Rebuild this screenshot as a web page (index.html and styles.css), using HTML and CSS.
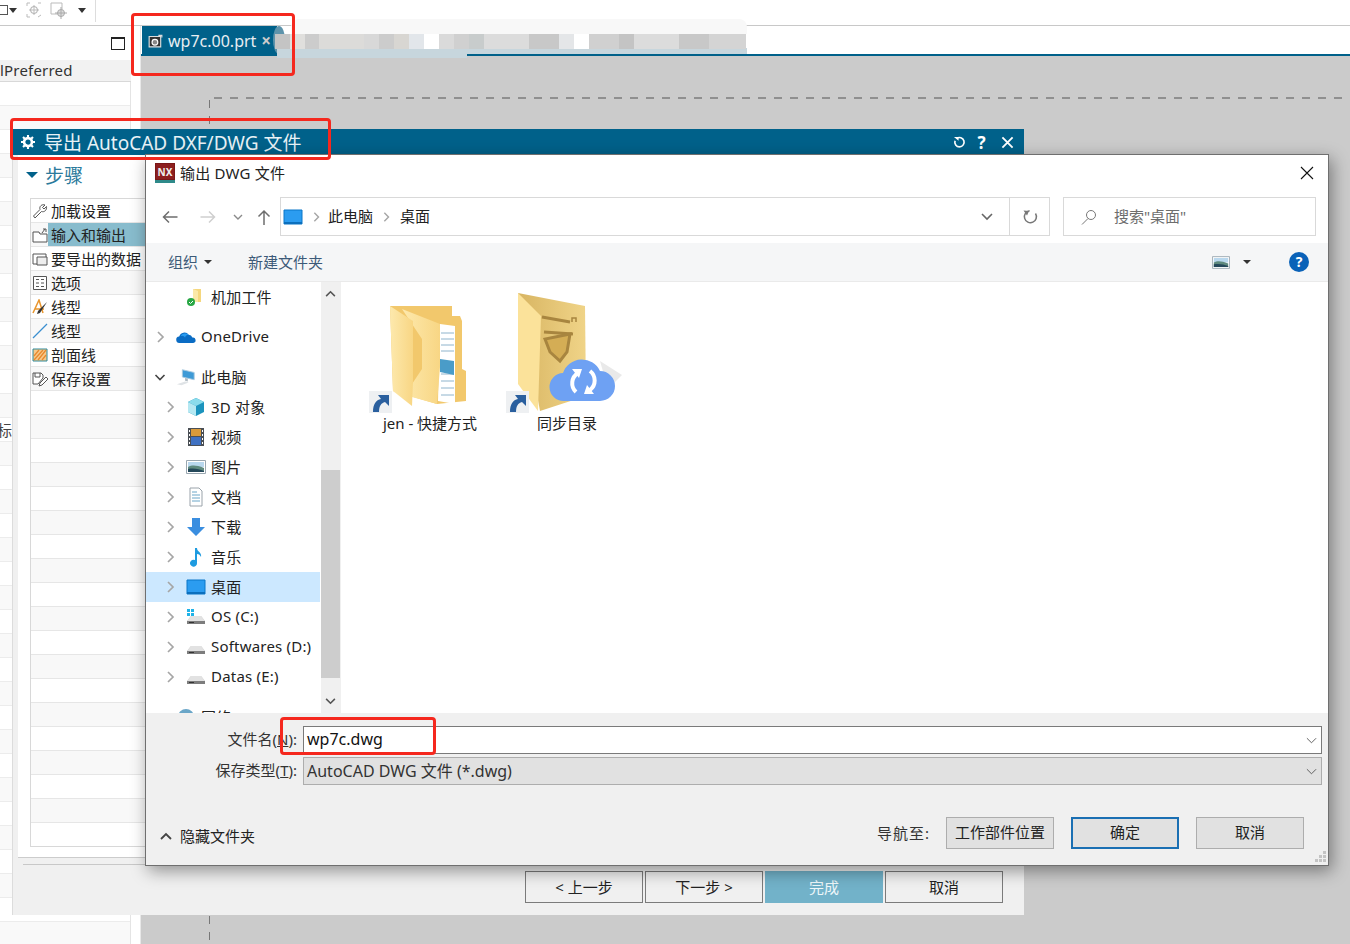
FILE: index.html
```html
<!DOCTYPE html>
<html lang="zh-CN">
<head>
    <meta charset="UTF-8">
    <title>wp7c.00.prt</title>
    <link rel="stylesheet" href="styles.css">
</head>
<body>
    <!-- shared icons -->
    <svg class="defs" aria-hidden="true">
        <symbol id="i-right" viewBox="0 0 12 12"><path d="M4 1 9 6 4 11" fill="none" stroke="#a6a6a6" stroke-width="1.700"/></symbol>
        <symbol id="i-drive" viewBox="0 0 20 20"><path d="M1 14 5 9h10l4 5v3H1z" fill="#c4c4c4"/><path d="M1 14h18v3H1z" fill="#7d7d7d"/><path d="M5 9h10l4 5H1z" fill="#e2e2e2"/><path d="M3 15h5v1H3z" fill="#333"/></symbol>
        <symbol id="i-desktop" viewBox="0 0 20 16"><path d="M1 1h18v14H1z" fill="#2b9cf0" stroke="#0b76c8"/><path d="M1 13h18v2H1z" fill="#0b6fbd"/></symbol>
        <symbol id="i-picture" viewBox="0 0 20 16"><path d="M.5 1.500h19v13H.5z" fill="#fff" stroke="#9aa7b0"/><path d="M2 3h16v5H2z" fill="#b9d8ee"/><path d="M2 8c4-2 8-2 16 1v4H2z" fill="#5e8a7e"/><path d="M2 10c6-1 11 0 16 2v1H2z" fill="#24485a"/></symbol>
        <symbol id="i-shortcut" viewBox="0 0 23 23"><path d="M0 0h23v23H0z" fill="#eef0f2"/><path d="M4 21c0-8 3-12 8-13L9 4h11v11l-4-4c-4 1-6 4-6 10z" fill="#2a5f9e"/></symbol>
    </svg>

    <div class="app">
        <div class="toolbar">
            <span class="cut-glyph"></span>
            <span class="caret"></span>
            <svg class="tool-icon" viewBox="0 0 16 16"><path d="M1 1h3M1 1v3M15 1h-3M1 15V12M4 15H1" fill="none" stroke="#bbb"/><circle cx="8" cy="8" r="3.500" fill="none" stroke="#aaa"/><path d="M8 3v10M3 8h10M12 15l3-2" stroke="#bbb" fill="none"/></svg>
            <svg class="tool-icon tool-icon-b" viewBox="0 0 18 18"><path d="M1 1h11v11H1z" fill="none" stroke="#bbb"/><circle cx="11" cy="11" r="3.500" fill="#ddd" stroke="#aaa"/><path d="M11 5v12M5 11h12" stroke="#aaa"/></svg>
            <span class="caret caret-b"></span>
            <span class="tool-sep"></span>
        </div>

        <div class="workspace">
            <div class="side-panel">
                <div class="side-top"><span class="max-box"></span></div>
                <div class="pref-head">lPreferred</div>
                <div class="pref-rows">标</div>
            </div>
            <div class="main-area">
                <div class="tab-strip">
                    <div class="tab">
                        <svg class="tab-icon" viewBox="0 0 13 13"><path d="M1 3h10v9H1z" fill="#333" stroke="#ddd"/><circle cx="6" cy="8" r="2.500" fill="#888" stroke="#fff"/><path d="M9 2h3v2" stroke="#ddd" fill="none"/></svg>
                        <span>wp7c.00.prt</span>
                        <span class="tab-close">×</span>
                    </div>
                    <div class="tab-end"></div>
                    <div class="blur-halo"></div>
                    <div class="blur-top"></div>
                    <div class="blur-block"></div>
                </div>
                <div class="canvas">
                    <div class="dash-h"></div>
                    <div class="dash-v"></div>
                </div>
            </div>
        </div>
    </div>

    <!-- NX export dialog -->
    <div class="window export-win">
        <div class="export-head">
            <svg class="gear" viewBox="0 0 16 16"><circle cx="8" cy="8" r="4.500" fill="none" stroke="#fff" stroke-width="3"/><path d="M8 0v3M8 13v3M0 8h3M13 8h3M2.300 2.300l2 2M11.700 11.700l2 2M13.700 2.300l-2 2M4.300 11.700l-2 2" stroke="#fff" stroke-width="2.400"/></svg>
            <span class="export-title">导出 AutoCAD DXF/DWG 文件</span>
            <svg class="head-btn" viewBox="0 0 14 14"><path d="M4 2.600a5 5 0 1 1-1.800 2.500" fill="none" stroke="#fff" stroke-width="1.800"/><path d="M1 1h5v4z" fill="#fff"/></svg>
            <span class="head-help">?</span>
            <svg class="head-btn" viewBox="0 0 14 14"><path d="M1.500 1.500l11 11M12.500 1.500l-11 11" stroke="#fff" stroke-width="2"/></svg>
        </div>
        <div class="export-body">
            <div class="steps-panel">
                <div class="steps-title"><span class="steps-caret"></span>步骤</div>
                <div class="steps-list">
                    <div class="step">
                        <svg viewBox="0 0 16 16"><path d="M1.500 13 8 6.500C7 3 10 1 13 2L10.500 4.500 12 6l2.500-2.500C15 7 12.500 9.500 9.500 8.500L3 15z" fill="#fff" stroke="#555"/></svg>
                        <span class="step-label">加载设置</span>
                    </div>
                    <div class="step">
                        <svg viewBox="0 0 16 16"><path d="M1 5h6l1 2h7v8H1z" fill="#fff" stroke="#555"/><path d="M10 6l3-4M11 2h3v3" fill="none" stroke="#555"/></svg>
                        <span class="step-label step-on">输入和输出</span>
                    </div>
                    <div class="step">
                        <svg viewBox="0 0 16 16"><path d="M1 3h13v10H1z" fill="#fff" stroke="#555"/><path d="M5 6h10v8H5z" fill="#eee" stroke="#555"/></svg>
                        <span class="step-label">要导出的数据</span>
                    </div>
                    <div class="step">
                        <svg viewBox="0 0 16 16"><path d="M1.500 1.500h13v13h-13z" fill="#fff" stroke="#555"/><path d="M4 4.500h3M9 4.500h3M4 8h3M9 8h3M4 11.500h3M9 11.500h3" stroke="#555"/></svg>
                        <span class="step-label">选项</span>
                    </div>
                    <div class="step">
                        <svg viewBox="0 0 16 16"><path d="M1 14 7 1l4 13M3 10h9" fill="none" stroke="#e8952d" stroke-width="1.500"/><path d="M15 3 6 12l-1 3 3-1z" fill="#333"/></svg>
                        <span class="step-label">线型</span>
                    </div>
                    <div class="step">
                        <svg viewBox="0 0 16 16"><path d="M1 15 15 1" stroke="#3a8fd0" stroke-width="1.200"/></svg>
                        <span class="step-label">线型</span>
                    </div>
                    <div class="step">
                        <svg viewBox="0 0 16 16"><path d="M1 2h14v12H1z" fill="#f7c98b" stroke="#2f8a9c"/><path d="M2 9l5-6M2 13l9-10M6 13l8-10M10 13l4-5" stroke="#e8892d" stroke-width="1.300"/></svg>
                        <span class="step-label">剖面线</span>
                    </div>
                    <div class="step">
                        <svg viewBox="0 0 16 16"><path d="M1 2h8l2 2v3l-5 6H1z" fill="#fff" stroke="#555"/><path d="M3 2v4h5V2" fill="none" stroke="#555"/><path d="M14 6 8 12l-1 3 3-1 6-6z" fill="#fff" stroke="#555"/></svg>
                        <span class="step-label">保存设置</span>
                    </div>
                </div>
            </div>
            <div class="export-rule"></div>
            <div class="export-btns">
                <button class="nx-btn">&lt; 上一步</button>
                <button class="nx-btn">下一步 &gt;</button>
                <button class="nx-btn nx-primary">完成</button>
                <button class="nx-btn">取消</button>
            </div>
        </div>
    </div>

    <!-- file save dialog -->
    <div class="window file-win">
        <div class="file-title">
            <span class="nx-logo">NX</span>
            <span class="file-title-text">输出 DWG 文件</span>
            <svg class="file-close" viewBox="0 0 14 14"><path d="M1 1l12 12M13 1 1 13" stroke="#111" stroke-width="1.100"/></svg>
        </div>

        <div class="nav-row">
            <svg class="nav-icon" viewBox="0 0 16 14"><path d="M16 7H2M7.500 1.500 2 7l5.500 5.500" fill="none" stroke="#6e6e6e" stroke-width="1.500"/></svg>
            <svg class="nav-icon nav-forward" viewBox="0 0 16 14"><path d="M0 7h14M8.500 1.500 14 7l-5.500 5.500" fill="none" stroke="#cfcfcf" stroke-width="1.500"/></svg>
            <svg class="nav-small" viewBox="0 0 10 6"><path d="M1 1l4 4 4-4" fill="none" stroke="#8a8a8a" stroke-width="1.400"/></svg>
            <svg class="nav-up" viewBox="0 0 14 16"><path d="M7 16V2M1.500 7.500 7 2l5.500 5.500" fill="none" stroke="#6e6e6e" stroke-width="1.500"/></svg>
            <div class="address">
                <svg class="addr-pc" viewBox="0 0 20 16"><use href="#i-desktop"/></svg>
                <svg class="addr-sep" viewBox="0 0 12 12"><use href="#i-right"/></svg>
                <span class="addr-text">此电脑</span>
                <svg class="addr-sep addr-sep-b" viewBox="0 0 12 12"><use href="#i-right"/></svg>
                <span class="addr-text">桌面</span>
                <svg class="addr-down" viewBox="0 0 12 8"><path d="M1 1l5 5 5-5" fill="none" stroke="#666" stroke-width="1.600"/></svg>
                <span class="addr-refresh">
                    <svg viewBox="0 0 16 16"><path d="M5 2.500a6 6 0 1 0 6.500 0" fill="none" stroke="#777" stroke-width="1.500" transform="rotate(25 8 8)"/><path d="M1.500 1.500 7 2 5 6.500z" fill="#777"/></svg>
                </span>
            </div>
            <div class="search">
                <svg viewBox="0 0 16 16"><circle cx="10" cy="6" r="4.500" fill="none" stroke="#777"/><path d="M7 9.500 1 15.500" stroke="#777"/></svg>
                <span>搜索"桌面"</span>
            </div>
        </div>

        <div class="cmd-row">
            <span class="cmd">组织</span><span class="cmd-caret"></span>
            <span class="cmd cmd-new">新建文件夹</span>
            <svg class="cmd-view" viewBox="0 0 20 16"><use href="#i-picture"/></svg>
            <span class="cmd-caret cmd-caret-view"></span>
            <span class="cmd-help">?</span>
        </div>

        <div class="file-main">
            <div class="tree">
                <div class="tree-row child">
                    <span class="arrow"></span>
                    <svg class="tree-icon" viewBox="0 0 20 20"><path d="M7 2h8v13H7z" fill="#f5d77e"/><path d="M7 2 12 4v11H7z" fill="#fbe8a8"/><circle cx="5" cy="15" r="4" fill="#28a745"/><path d="M3 15l1.500 1.500L7 14" stroke="#fff" fill="none"/></svg>
                    <span>机加工件</span>
                </div>
                <div class="tree-row root gap">
                    <span class="arrow"><svg viewBox="0 0 12 12"><use href="#i-right"/></svg></span>
                    <svg class="tree-icon" viewBox="0 0 22 14"><path d="M4 13.500a3.500 3.500 0 0 1-.5-7A6 6 0 0 1 14 4.500a4.500 4.500 0 0 1 4 3 3 3 0 0 1 1 6z" fill="#0a6cc4"/><path d="M5 6a6 6 0 0 1 9-1.500 4 4 0 0 0-4 3 4 4 0 0 0-5-1.500z" fill="#2a9cf0"/></svg>
                    <span>OneDrive</span>
                </div>
                <div class="tree-row root gap">
                    <span class="arrow"><svg viewBox="0 0 12 12"><path d="M1.500 4 6 8.500 10.500 4" fill="none" stroke="#444" stroke-width="1.600"/></svg></span>
                    <svg class="tree-icon" viewBox="0 0 22 20"><path d="M7 2l13 3v8L7 10z" fill="#3e9ad6" stroke="#a9c9de"/><path d="M1 18l9-3 4 1-8 3z" fill="#dfe3e6"/><path d="M10 11l3 1v3l-3-1z" fill="#aeb9c1"/></svg>
                    <span>此电脑</span>
                </div>
                <div class="tree-row child">
                    <span class="arrow"><svg viewBox="0 0 12 12"><use href="#i-right"/></svg></span>
                    <svg class="tree-icon" viewBox="0 0 20 20"><path d="M10 1l8 4v10l-8 4-8-4V5z" fill="#1b93bd"/><path d="M2 5l8 4 8-4-8-4z" fill="#8adcec"/><path d="M2 5l8 4v10l-8-4z" fill="#b5e8f2"/></svg>
                    <span>3D 对象</span>
                </div>
                <div class="tree-row child">
                    <span class="arrow"><svg viewBox="0 0 12 12"><use href="#i-right"/></svg></span>
                    <svg class="tree-icon" viewBox="0 0 20 20"><path d="M2 1h16v18H2z" fill="#4a4f55"/><path d="M5 2h10v7H5z" fill="#d99a3a"/><path d="M5 10h10v8H5z" fill="#3f71c2"/><path d="M3 3h1v2H3zM3 7h1v2H3zM3 11h1v2H3zM3 15h1v2H3zM16 3h1v2h-1zM16 7h1v2h-1zM16 11h1v2h-1zM16 15h1v2h-1z" fill="#fff"/></svg>
                    <span>视频</span>
                </div>
                <div class="tree-row child">
                    <span class="arrow"><svg viewBox="0 0 12 12"><use href="#i-right"/></svg></span>
                    <svg class="tree-icon" viewBox="0 0 20 16"><use href="#i-picture"/></svg>
                    <span>图片</span>
                </div>
                <div class="tree-row child">
                    <span class="arrow"><svg viewBox="0 0 12 12"><use href="#i-right"/></svg></span>
                    <svg class="tree-icon" viewBox="0 0 20 20"><path d="M4 1h9l3 3v15H4z" fill="#fff" stroke="#9aa3aa"/><path d="M6 5h5M6 8h8M6 11h8M6 14h8" stroke="#6aa6c8"/></svg>
                    <span>文档</span>
                </div>
                <div class="tree-row child">
                    <span class="arrow"><svg viewBox="0 0 12 12"><use href="#i-right"/></svg></span>
                    <svg class="tree-icon" viewBox="0 0 20 20"><path d="M6 1h8v9h5l-9 9-9-9h5z" fill="#3a8ee0"/></svg>
                    <span>下载</span>
                </div>
                <div class="tree-row child">
                    <span class="arrow"><svg viewBox="0 0 12 12"><use href="#i-right"/></svg></span>
                    <svg class="tree-icon" viewBox="0 0 20 20"><path d="M9 1h2c0 4 5 4 4 9-1-2-2-3-4-3v9a3.500 3.500 0 1 1-2-3z" fill="#1e9be0"/></svg>
                    <span>音乐</span>
                </div>
                <div class="tree-row child selected">
                    <span class="arrow"><svg viewBox="0 0 12 12"><use href="#i-right"/></svg></span>
                    <svg class="tree-icon" viewBox="0 0 20 16"><use href="#i-desktop"/></svg>
                    <span>桌面</span>
                </div>
                <div class="tree-row child">
                    <span class="arrow"><svg viewBox="0 0 12 12"><use href="#i-right"/></svg></span>
                    <svg class="tree-icon" viewBox="0 0 20 20"><use href="#i-drive"/><path d="M1 2h3v3H1zM5 2h3v3H5zM1 6h3v3H1zM5 6h3v3H5z" fill="#1fb3e8"/></svg>
                    <span>OS (C:)</span>
                </div>
                <div class="tree-row child">
                    <span class="arrow"><svg viewBox="0 0 12 12"><use href="#i-right"/></svg></span>
                    <svg class="tree-icon" viewBox="0 0 20 20"><use href="#i-drive"/></svg>
                    <span>Softwares (D:)</span>
                </div>
                <div class="tree-row child">
                    <span class="arrow"><svg viewBox="0 0 12 12"><use href="#i-right"/></svg></span>
                    <svg class="tree-icon" viewBox="0 0 20 20"><use href="#i-drive"/></svg>
                    <span>Datas (E:)</span>
                </div>
                <div class="tree-row root gap">
                    <span class="arrow"></span>
                    <svg class="tree-icon" viewBox="0 0 20 20"><circle cx="10" cy="10" r="8" fill="#6aa6c8"/></svg>
                    <span>网络</span>
                </div>
            </div>

            <div class="scrollbar">
                <svg class="scroll-btn" viewBox="0 0 12 8"><path d="M1 7l5-5 5 5" fill="none" stroke="#555" stroke-width="1.800"/></svg>
                <div class="scroll-track"><div class="scroll-thumb"></div></div>
                <svg class="scroll-btn" viewBox="0 0 12 8"><path d="M1 1l5 5 5-5" fill="none" stroke="#555" stroke-width="1.800"/></svg>
            </div>

            <div class="files">
                <div class="file-item">
                    <svg class="file-icon" viewBox="0 0 122 124">
                        <defs>
                            <linearGradient id="leaf" x1="0" y1="0" x2="1" y2="0"><stop offset="0" stop-color="#fde9ad"/><stop offset="1" stop-color="#f8d684"/></linearGradient>
                        </defs>
                        <path d="M21 17h62v10h8l2 5v48l4 2v30l-29 3-44-13z" fill="#f2c86c"/>
                        <path d="M71 35l15 2v78l-17-3z" fill="#fff"/>
                        <path d="M72 44h13M72 50h13M72 56h13M72 62h13M72 85h13M72 92h13M72 99h13M72 106h13" stroke="#8fb4cc"/>
                        <path d="M71 70l14 2v14l-14-3z" fill="#4a9cc8"/>
                        <path d="M33 20l38 15v43l-3 37-25-7V95l10-15V50z" fill="url(#leaf)"/>
                        <path d="M21 17l23 15v60l-1 25-19-15z" fill="url(#leaf)"/>
                        <use href="#i-shortcut" x="0" y="102" width="23" height="23"/>
                    </svg>
                    <span>jen - 快捷方式</span>
                </div>
                <div class="file-item">
                    <svg class="file-icon" viewBox="0 0 122 124">
                        <defs>
                            <linearGradient id="gold" x1="0" y1="0" x2="1" y2="0"><stop offset="0" stop-color="#d8b562"/><stop offset="1" stop-color="#f0d488"/></linearGradient>
                        </defs>
                        <path d="M12 4l67 13 1 90-46 15z" fill="url(#gold)"/>
                        <path d="M36 28l28 5M38 43l29 2" fill="none" stroke="#a8853f" stroke-width="3"/>
                        <path d="M39 50l5 13 10 9 7-9 3-18z" fill="#d4ad55" stroke="#a8853f" stroke-width="3"/>
                        <path d="M66 33v-4h4v4" fill="none" stroke="#a8853f" stroke-width="1.500"/>
                        <path d="M12 4l23 23-3 95-20-27z" fill="#fbe29a"/>
                        <path d="M94 72l22 14-14 14z" fill="#e9e9e9"/>
                        <path d="M58 112a14 14 0 0 1-1-28 20 20 0 0 1 37-2 15 15 0 0 1 0 30z" fill="#6ea1f3"/>
                        <g transform="translate(0 4)">
                            <path d="M70 99a12 12 0 0 1 2-19M84 78a12 12 0 0 1 0 19" fill="none" stroke="#fff" stroke-width="4"/>
                            <path d="M66 76h10l-3 9zM88 101H78l3-9z" fill="#fff"/>
                        </g>
                        <use href="#i-shortcut" x="0" y="102" width="23" height="23"/>
                    </svg>
                    <span>同步目录</span>
                </div>
            </div>
        </div>

        <div class="file-bottom">
            <div class="field-row">
                <label class="field-label">文件名(<u>N</u>):</label>
                <div class="combo"><span>wp7c.dwg</span><svg viewBox="0 0 12 7"><path d="M1 1l5 5 5-5" fill="none" stroke="#555"/></svg></div>
            </div>
            <div class="field-row">
                <label class="field-label">保存类型(<u>T</u>):</label>
                <div class="combo combo-off"><span>AutoCAD DWG 文件 (*.dwg)</span><svg viewBox="0 0 12 7"><path d="M1 1l5 5 5-5" fill="none" stroke="#555"/></svg></div>
            </div>
            <div class="file-foot">
                <svg class="hide-icon" viewBox="0 0 12 8"><path d="M1 7l5-5 5 5" fill="none" stroke="#444" stroke-width="1.800"/></svg>
                <span class="hide-text">隐藏文件夹</span>
                <span class="nav-to">导航至:</span>
                <button class="win-btn win-part">工作部件位置</button>
                <button class="win-btn win-default">确定</button>
                <button class="win-btn win-cancel">取消</button>
            </div>
            <svg class="grip" viewBox="0 0 12 12"><path d="M9 0h3v3H9zM5 4h3v3H5zM9 4h3v3H9zM1 8h3v3H1zM5 8h3v3H5zM9 8h3v3H9z" fill="#c4c4c4"/></svg>
        </div>
    </div>

    <!-- red annotation boxes -->
    <div class="mark mark-tab"></div>
    <div class="mark mark-title"></div>
    <div class="mark mark-name"></div>
</body>
</html>
```

FILE: styles.css
```css
* {
    box-sizing: border-box;
    margin: 0;
    padding: 0;
}

body {
    position: relative;
    width: 1350px;
    height: 944px;
    overflow: hidden;
    background-color: #fff;
    color: #222;
    font-family: "Noto Sans", "Noto Sans CJK SC", sans-serif;
    font-size: 15px;
}

.defs {
    display: none;
}

button {
    font-family: inherit;
    font-size: 15px;
    color: #222;
}

/* Main app behind the dialogs */
.app {
    display: flex;
    flex-direction: column;
    height: 944px;
}

.toolbar {
    display: flex;
    align-items: flex-start;
    height: 26px;
    border-bottom: 1px solid #c8c8c8;
    flex-shrink: 0;
}

.cut-glyph {
    width: 8px;
    height: 10px;
    margin-top: 5px;
    border: 1px solid #555;
    border-left: none;
}

.caret {
    width: 0;
    height: 0;
    margin: 8px 0 0 1px;
    border: 4px solid transparent;
    border-top: 5px solid #333;
    border-bottom: none;
}

.caret-b {
    margin-left: 10px;
}

.tool-icon {
    width: 16px;
    height: 16px;
    margin: 2px 0 0 9px;
}

.tool-icon-b {
    width: 18px;
    height: 18px;
    margin-left: 8px;
}

.tool-sep {
    width: 1px;
    height: 22px;
    margin-left: 9px;
    background-color: #ddd;
}

.workspace {
    display: flex;
    flex: 1;
}

.side-panel {
    width: 141px;
    border-right: 1px solid #e8e8e8;
    background-color: #fff;
    flex-shrink: 0;
}

.side-top {
    display: flex;
    justify-content: flex-end;
    height: 34px;
    padding: 11px 15px 0 0;
}

.max-box {
    width: 14px;
    height: 13px;
    border: 1px solid #222;
    border-top-width: 2px;
}

.pref-head {
    width: 131px;
    height: 22px;
    border-bottom: 1px solid #d8d8d8;
    background-color: #f2f2f2;
    color: #333;
    letter-spacing: 0.2px;
    line-height: 20px;
}

.pref-rows {
    width: 131px;
    height: 862px;
    padding-top: 336px;
    border-right: 1px solid #e4e4e4;
    background-image: repeating-linear-gradient(#fff 0, #fff 23px, #ececec 23px, #ececec 24px, #f9f9f9 24px, #f9f9f9 47px, #ececec 47px, #ececec 48px);
    color: #444;
    line-height: 24px;
    text-indent: -3px;
}

.main-area {
    display: flex;
    flex-direction: column;
    flex: 1;
}

.tab-strip {
    position: relative;
    z-index: 1;
    height: 30px;
    border-bottom: 2px solid #00618a;
    flex-shrink: 0;
}

.tab {
    display: flex;
    align-items: center;
    width: 135px;
    height: 29px;
    margin-left: 1px;
    padding-left: 6px;
    background-color: #00618a;
    color: #e8eef2;
    font-size: 16px;
}

.tab-icon {
    width: 15px;
    height: 15px;
    margin-right: 5px;
}

.tab-close {
    margin-left: 5px;
    color: #ccc;
    font-size: 17px;
    font-weight: 700;
}

.tab-end {
    position: absolute;
    left: 132px;
    top: 0;
    width: 12px;
    height: 28px;
    border-radius: 50%;
    background-color: #5d93ab;
}

.blur-halo {
    position: absolute;
    left: 136px;
    top: 22px;
    width: 470px;
    height: 6px;
    background-color: #c7d6dd;
}

/* the smear also runs over the canvas for the first part of the strip */
.blur-halo::after {
    content: "";
    position: absolute;
    left: 0;
    top: 6px;
    width: 190px;
    height: 4px;
    background-color: #c7d6dd;
}

.blur-top {
    position: absolute;
    left: 150px;
    top: -7px;
    width: 456px;
    height: 15px;
    border-radius: 8px 8px 0 0;
    background-color: #f8f8f8;
}

.blur-block {
    position: absolute;
    left: 134px;
    top: 8px;
    width: 471px;
    height: 15px;
    background-image: linear-gradient(90deg,
        #c4c4c4 0, #c4c4c4 15px,
        #e0dfdd 15px, #e0dfdd 30px,
        #ccc 30px, #ccc 44px,
        #dcdbd9 44px, #dcdbd9 89px,
        #d8d8d8 89px, #d8d8d8 104px,
        #ccc 104px, #ccc 119px,
        #d8d6d2 119px, #d8d6d2 134px,
        #e2e6ea 134px, #e2e6ea 149px,
        #fff 149px, #fff 164px,
        #dadada 164px, #dadada 179px,
        #d0d0d0 179px, #d0d0d0 194px,
        #c8cccc 194px, #c8cccc 209px,
        #dcdcdc 209px, #dcdcdc 254px,
        #c8c8c8 254px, #c8c8c8 284px,
        #e4e6e8 284px, #e4e6e8 299px,
        #fff 299px, #fff 314px,
        #d0d0d0 314px, #d0d0d0 344px,
        #c4c4c4 344px, #c4c4c4 359px,
        #dcdcdc 359px, #dcdcdc 404px,
        #c8c8c8 404px, #c8c8c8 434px,
        #d4d4d4 434px, #d4d4d4 471px);
}

.canvas {
    position: relative;
    flex: 1;
    background-color: #cbcbcb;
}

.dash-h {
    position: absolute;
    left: 73px;
    right: 0;
    top: 41px;
    height: 2px;
    background-image: repeating-linear-gradient(90deg, #8f8f8f 0, #8f8f8f 8px, transparent 8px, transparent 16px);
}

.dash-v {
    position: absolute;
    left: 68px;
    top: 44px;
    bottom: 0;
    width: 1px;
    background-image: repeating-linear-gradient(#777 0, #777 8px, transparent 8px, transparent 16px);
}

/* Windows on top of the app */
.window {
    position: absolute;
    z-index: 2;
}

.export-win {
    left: 12px;
    top: 129px;
    display: flex;
    flex-direction: column;
    width: 1012px;
    height: 786px;
    background-color: #f0f0f0;
}

.export-head {
    display: flex;
    align-items: center;
    height: 26px;
    padding: 0 10px 0 9px;
    background-color: #00618a;
    color: #e8f2f6;
    flex-shrink: 0;
}

.gear {
    width: 14px;
    height: 14px;
    margin-right: 9px;
}

.export-title {
    flex: 1;
    font-size: 19px;
}

.head-btn {
    width: 13px;
    height: 13px;
}

.head-help {
    width: 31px;
    margin-right: 4px;
    color: #fff;
    font-size: 17px;
    font-weight: 700;
    text-align: center;
}

.export-body {
    display: flex;
    flex-direction: column;
    flex: 1;
    border-left: 1px solid #dcdcdc;
}

.steps-panel {
    width: 128px;
    height: 703px;
    margin-left: 5px;
    padding: 0 0 10px 12px;
    border-bottom: 1px solid #ccc;
    background-color: #fff;
}

.steps-title {
    display: flex;
    align-items: center;
    height: 43px;
    padding-bottom: 4px;
    color: #2b7a9c;
    font-size: 19px;
}

.steps-caret {
    width: 0;
    height: 0;
    margin: 0 7px 0 -4px;
    border: 6px solid transparent;
    border-top: 6px solid #00618a;
    border-bottom: none;
}

.steps-list {
    height: 649px;
    border: 1px solid #d8d8d8;
    border-right: none;
    background-image: repeating-linear-gradient(#fff 0, #fff 23px, #e6e6e6 23px, #e6e6e6 24px, #f8f8f8 24px, #f8f8f8 47px, #e6e6e6 47px, #e6e6e6 48px);
}

.step {
    display: flex;
    align-items: center;
    height: 24px;
    padding-left: 1px;
    border-bottom: 1px solid #e6e6e6;
    white-space: nowrap;
    overflow: hidden;
}

.step svg {
    width: 16px;
    height: 16px;
    flex-shrink: 0;
}

.step-label {
    flex: 1;
    height: 24px;
    padding-left: 3px;
    line-height: 24px;
}

.step-on {
    background-color: #88bccd;
}

.export-rule {
    height: 1px;
    margin: 6px 0 0 10px;
    background-color: #c8c8c8;
}

.export-btns {
    display: flex;
    justify-content: flex-end;
    gap: 2px;
    padding: 6px 21px 0 0;
}

.nx-btn {
    width: 118px;
    height: 32px;
    padding-bottom: 2px;
    border: 1px solid #7b7b7b;
    background-color: #f0f0f0;
}

.nx-primary {
    border-color: #72b2c9;
    background-color: #72b2c9;
    color: #eef7fa;
}

/* File dialog */
.file-win {
    left: 145px;
    top: 154px;
    display: flex;
    flex-direction: column;
    width: 1184px;
    height: 712px;
    border: 1px solid #6f6f6f;
    background-color: #fff;
    box-shadow: 3px 5px 16px rgba(0, 0, 0, 0.4);
}

.file-title {
    display: flex;
    align-items: center;
    height: 36px;
    padding: 0 14px 0 9px;
    flex-shrink: 0;
}

.nx-logo {
    width: 20px;
    height: 20px;
    margin-right: 5px;
    background-color: #8d1f1f;
    border-bottom: 3px solid #2f8a8a;
    box-shadow: inset 0 0 0 1px #7a1818;
    color: #eee;
    font-size: 10px;
    font-weight: 700;
    line-height: 19px;
    text-align: center;
}

.file-title-text {
    flex: 1;
    padding-bottom: 2px;
    letter-spacing: 0.2px;
}

.file-close {
    width: 14px;
    height: 14px;
}

.nav-row {
    display: flex;
    align-items: center;
    height: 39px;
    margin-top: 6px;
    padding: 0 12px 0 15px;
    flex-shrink: 0;
}

.nav-icon {
    width: 17px;
    height: 14px;
}

.nav-forward {
    margin-left: 22px;
}

.nav-small {
    width: 10px;
    height: 6px;
    margin-left: 16px;
}

.nav-up {
    width: 14px;
    height: 16px;
    margin: 0 9px 0 14px;
}

.address {
    display: flex;
    align-items: center;
    width: 770px;
    height: 39px;
    padding-left: 2px;
    border: 1px solid #d9d9d9;
}

.addr-pc {
    width: 20px;
    height: 16px;
}

.addr-sep {
    width: 10px;
    height: 10px;
    margin: 0 7px 0 8px;
}

.addr-sep-b {
    margin-right: 9px;
}

.addr-text {
    padding-bottom: 2px;
}

.addr-down {
    width: 12px;
    height: 8px;
    margin-left: auto;
}

.addr-refresh {
    display: flex;
    align-items: center;
    justify-content: center;
    width: 40px;
    height: 37px;
    margin-left: 16px;
    border-left: 1px solid #d9d9d9;
}

.addr-refresh svg {
    width: 16px;
    height: 16px;
}

.search {
    display: flex;
    align-items: center;
    width: 253px;
    height: 39px;
    margin-left: 13px;
    padding-left: 17px;
    border: 1px solid #d9d9d9;
    color: #6d6d6d;
}

.search span {
    padding-bottom: 2px;
}

.search svg {
    width: 16px;
    height: 16px;
    margin-right: 17px;
}

.cmd-row {
    display: flex;
    align-items: center;
    height: 39px;
    margin-top: 7px;
    padding-left: 22px;
    border-bottom: 1px solid #eaeaea;
    background-color: #f5f6f7;
    flex-shrink: 0;
}

.cmd {
    padding-bottom: 2px;
    color: #3c5a78;
}

.cmd-new {
    margin-left: 36px;
}

.cmd-caret {
    width: 0;
    height: 0;
    margin-left: 6px;
    border: 4px solid transparent;
    border-top: 4px solid #333;
    border-bottom: none;
}

.cmd-view {
    width: 18px;
    height: 15px;
    margin-left: auto;
}

.cmd-caret-view {
    margin-left: 13px;
}

.cmd-help {
    width: 20px;
    height: 20px;
    margin: 0 19px 0 38px;
    border-radius: 50%;
    background-color: #0a62b8;
    color: #fff;
    font-weight: 700;
    font-size: 14px;
    line-height: 20px;
    text-align: center;
}

.file-main {
    display: flex;
    height: 431px;
    flex-shrink: 0;
}

.tree {
    width: 175px;
    height: 431px;
    overflow: hidden;
    flex-shrink: 0;
}

.tree-row {
    display: flex;
    align-items: center;
    height: 30px;
    letter-spacing: 0.2px;
    white-space: nowrap;
}

.tree-row > span:last-child {
    padding-bottom: 2px;
}

.tree-row.root {
    padding-left: 9px;
}

.tree-row.child {
    padding-left: 19px;
}

.tree-row.gap {
    margin-top: 10px;
}

.tree-row.selected {
    margin-right: 1px;
    background-color: #cce8ff;
}

.arrow {
    display: flex;
    align-items: center;
    width: 16px;
    height: 12px;
    flex-shrink: 0;
}

.arrow svg {
    width: 12px;
    height: 12px;
    margin-left: -1px;
}

.tree-icon {
    width: 20px;
    height: 20px;
    margin: 0 5px;
    flex-shrink: 0;
}

.scrollbar {
    display: flex;
    flex-direction: column;
    width: 20px;
    height: 431px;
    background-color: #f0f0f0;
    flex-shrink: 0;
}

.scroll-btn {
    width: 11px;
    height: 7px;
    margin: 8px 4px;
    flex-shrink: 0;
}

.scroll-track {
    flex: 1;
    padding-top: 165px;
}

.scroll-thumb {
    height: 208px;
    margin-right: 1px;
    background-color: #cdcdcd;
}

.files {
    display: flex;
    flex: 1;
    gap: 15px;
    padding: 7px 0 0 28px;
}

.file-item {
    display: flex;
    flex-direction: column;
    align-items: center;
    width: 122px;
}

.file-icon {
    width: 122px;
    height: 124px;
}

.file-item span {
    line-height: 20px;
}

.file-bottom {
    position: relative;
    flex: 1;
    padding: 13px 6px 0 0;
    background-color: #f0f0f0;
}

.field-row {
    display: flex;
    align-items: center;
    height: 28px;
    margin-bottom: 3px;
}

.field-label {
    width: 151px;
    padding-bottom: 3px;
    color: #333;
    text-align: right;
    white-space: nowrap;
}

.combo {
    display: flex;
    align-items: center;
    justify-content: space-between;
    width: 1019px;
    height: 28px;
    margin-left: 6px;
    padding: 0 4px 0 3px;
    border: 1px solid #7a7a7a;
    background-color: #fff;
    color: #111;
    font-size: 16px;
}

.combo span {
    padding-bottom: 3px;
}

.combo svg {
    width: 11px;
    height: 7px;
}

.combo-off {
    border-color: #adadad;
    background-color: #e1e1e1;
    color: #333;
}

.file-foot {
    display: flex;
    align-items: center;
    height: 32px;
    margin-top: 32px;
    padding-left: 14px;
}

.hide-icon {
    width: 12px;
    height: 8px;
    margin-top: 6px;
}

.hide-text {
    margin: 4px auto 0 8px;
    color: #222;
}

.nav-to {
    margin-right: 16px;
    padding-bottom: 2px;
    color: #333;
    letter-spacing: 1px;
}

.win-btn {
    width: 108px;
    height: 32px;
    padding-bottom: 3px;
    border: 1px solid #adadad;
    background-color: #e1e1e1;
}

.win-default {
    margin: 0 17px;
    border: 2px solid #1a6fb3;
}

.win-cancel {
    margin-right: 18px;
}

.grip {
    position: absolute;
    right: 2px;
    bottom: 2px;
    width: 12px;
    height: 12px;
}

/* Red boxes drawn on the screenshot */
.mark {
    position: absolute;
    z-index: 3;
    border: 3px solid #f5281e;
    border-radius: 4px;
}

.mark-tab {
    left: 131px;
    top: 13px;
    width: 164px;
    height: 63px;
}

.mark-title {
    left: 10px;
    top: 118px;
    width: 321px;
    height: 42px;
}

.mark-name {
    left: 280px;
    top: 717px;
    width: 156px;
    height: 38px;
}
```
